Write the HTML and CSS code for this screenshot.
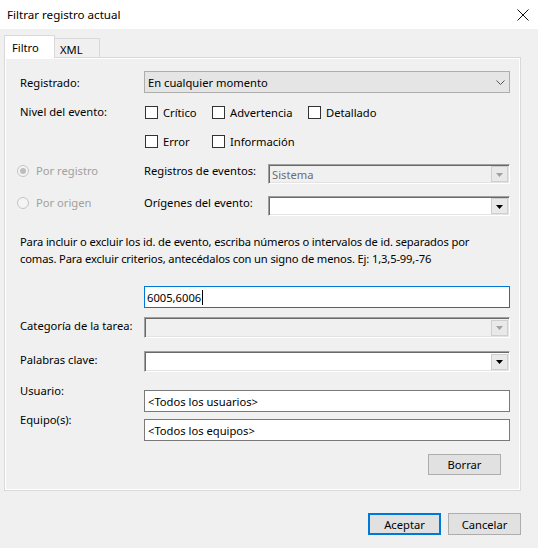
FILE: index.html
```html
<!DOCTYPE html>
<html lang="es">
<head>
<meta charset="utf-8">
<title>Filtrar registro actual</title>
<link rel="stylesheet" href="styles.css">
</head>
<body>
<div class="titlebar">
  <span class="title">Filtrar registro actual</span>
  <svg class="close" width="12" height="12" viewBox="0 0 12 12"><path d="M0.5 0.5L11.5 11.5M11.5 0.5L0.5 11.5" stroke="#111" stroke-width="1" fill="none"/></svg>
</div>
<div class="tabs">
  <div class="tab active">Filtro</div>
  <div class="tab">XML</div>
</div>
<div class="panel">
  <div class="row row-logged">
    <span class="label">Registrado:</span>
    <div class="select"><span>En cualquier momento</span><svg width="9" height="5" viewBox="0 0 9 5"><path d="M0.5 0.5L4.5 4.5L8.5 0.5" fill="none" stroke="#555" stroke-width="1"/></svg></div>
  </div>
  <div class="row row-level">
    <span class="label label-first">Nivel del evento:</span>
    <div class="checks">
      <label class="check"><span class="box"></span>Crítico</label>
      <label class="check"><span class="box"></span>Advertencia</label>
      <label class="check"><span class="box"></span>Detallado</label>
      <label class="check"><span class="box"></span>Error</label>
      <label class="check"><span class="box"></span>Información</label>
    </div>
  </div>
  <div class="row3 row-src1">
    <label class="radio disabled"><span class="dot checked"></span>Por registro</label>
    <span class="label">Registros de eventos:</span>
    <div class="combo disabled"><span class="combo-text">Sistema</span><span class="drop"><svg width="7" height="4" viewBox="0 0 7 4"><path d="M0 0H7L3.5 4Z" fill="#a0a0a0"/></svg></span></div>
  </div>
  <div class="row3 row-src2">
    <label class="radio disabled"><span class="dot"></span>Por origen</label>
    <span class="label">Orígenes del evento:</span>
    <div class="combo"><span class="combo-text"></span><span class="drop"><svg width="7" height="4" viewBox="0 0 7 4"><path d="M0 0H7L3.5 4Z" fill="#000"/></svg></span></div>
  </div>
  <p class="help">Para incluir o excluir los id. de evento, escriba números o intervalos de id. separados por<br>comas. Para excluir criterios, antecédalos con un signo de menos. Ej: 1,3,5-99,-76</p>
  <div class="row row-ids">
    <span></span>
    <div class="input focus">6005,6006<span class="caret"></span></div>
  </div>
  <div class="row row-cat">
    <span class="label">Categoría de la tarea:</span>
    <div class="combo combo21 disabled"><span class="combo-text"></span><span class="drop"><svg width="7" height="4" viewBox="0 0 7 4"><path d="M0 0H7L3.5 4Z" fill="#a0a0a0"/></svg></span></div>
  </div>
  <div class="row row-kw">
    <span class="label">Palabras clave:</span>
    <div class="combo combo21"><span class="combo-text"></span><span class="drop"><svg width="7" height="4" viewBox="0 0 7 4"><path d="M0 0H7L3.5 4Z" fill="#000"/></svg></span></div>
  </div>
  <div class="row row-user">
    <span class="label label-high">Usuario:</span>
    <div class="input">&lt;Todos los usuarios&gt;</div>
  </div>
  <div class="row row-pc">
    <span class="label label-high">Equipo(s):</span>
    <div class="input">&lt;Todos los equipos&gt;</div>
  </div>
  <div class="clear-row">
    <button class="btn">Borrar</button>
  </div>
</div>
<div class="actions">
  <button class="btn default">Aceptar</button>
  <button class="btn">Cancelar</button>
</div>
</body>
</html>
```
FILE: styles.css
```css
* { box-sizing: border-box; }
html, body { margin: 0; padding: 0; }
body {
  width: 538px;
  height: 548px;
  overflow: hidden;
  background: #f0f0f0;
  font-family: "Noto Sans", "DejaVu Sans", sans-serif;
  font-size: 11.2px;
  color: #000;
}
.titlebar {
  height: 29px;
  background: #fff;
  display: flex;
  align-items: center;
  justify-content: space-between;
  padding: 0 9px 0 7px;
}
.title { font-size: 11.6px; }
.close { display: block; margin-top: 1px; }

.tabs {
  height: 28px;
  display: flex;
  align-items: flex-end;
  padding-left: 4px;
  position: relative;
  z-index: 1;
}
.tab {
  display: flex;
  align-items: center;
  border: 1px solid #d9d9d9;
  border-bottom: none;
  background: #f0f0f0;
}
.tab.active {
  width: 51px;
  height: 23px;
  margin-bottom: -1px;
  padding-left: 7px;
  background: #fff;
}
.tab:not(.active) {
  width: 45px;
  height: 19px;
  border-left: none;
  padding-left: 5px;
  padding-top: 2px;
}

.panel {
  margin-left: 4px;
  width: 517px;
  height: 434px;
  border: 1px solid #d9d9d9;
  box-shadow: inset 1px 1px 0 #fff, inset -1px -1px 0 #fff;
  padding: 13px 10px 0 15px;
}
.row {
  display: grid;
  grid-template-columns: 124px 1fr;
  align-items: start;
}
.row3 {
  display: grid;
  grid-template-columns: 124px 124px 1fr;
  align-items: start;
  height: 20px;
}
.label { line-height: 17px; white-space: nowrap; }
.label-high { margin-top: -8px; }
.row3 .label { margin-top: -2px; }

.row-logged { align-items: center; height: 22px; }
.select {
  height: 22px;
  border: 1px solid #adadad;
  background: #e5e5e5;
  display: flex;
  align-items: center;
  justify-content: space-between;
  padding: 0 4px 0 3px;
}
.select svg { display: block; }

.row-level { margin-top: 9px; }
.label-first { line-height: 20px; }
.checks {
  display: grid;
  grid-template-columns: 67px 96px auto;
  row-gap: 9px;
}
.check {
  height: 20px;
  display: flex;
  align-items: center;
  gap: 5px;
  padding-left: 1px;
}
.box {
  width: 13px;
  height: 13px;
  border: 1px solid #333;
  background: #fff;
  flex: none;
}

.row-src1 { margin-top: 13px; }
.row-src2 { margin-top: 12px; }
.radio {
  display: flex;
  align-items: center;
  gap: 7px;
  height: 17px;
  margin-top: -2px;
  margin-left: -3px;
}
.radio.disabled { color: #a0a0a0; }
.dot {
  width: 12px;
  height: 12px;
  border-radius: 50%;
  border: 1px solid #c4c4c4;
  background: #f4f4f4;
  display: flex;
  align-items: center;
  justify-content: center;
  flex: none;
}
.dot.checked::after {
  content: "";
  width: 6px;
  height: 6px;
  border-radius: 50%;
  background: #bdbdbd;
}

.combo {
  height: 20px;
  border: 1px solid;
  border-color: #a0a0a0 #fff #fff #a0a0a0;
  box-shadow: inset 1px 1px 0 #696969, inset -1px -1px 0 #e3e3e3;
  background: #fff;
  display: flex;
  align-items: center;
  justify-content: space-between;
  padding: 0 1px 0 2px;
}
.combo21 { height: 21px; }
.combo.disabled { background: #f0f0f0; }
.combo-text { color: #6d6d6d; padding-left: 1px; }
.drop {
  width: 17px;
  height: 16px;
  border: 1px solid #cfcfcf;
  background: #e9e9e9;
  display: flex;
  align-items: center;
  justify-content: center;
}
.drop svg { display: block; margin-top: 1px; }

.help {
  margin: 17px 0 0 0;
  line-height: 17px;
  white-space: nowrap;
  letter-spacing: -0.15px;
}

.row-ids { margin-top: 19px; }
.input {
  height: 22px;
  border: 1px solid #7a7a7a;
  background: #fff;
  display: flex;
  align-items: center;
  padding-left: 3px;
  white-space: nowrap;
}
.input.focus { border-color: #0078d7; padding-left: 2px; }
.caret {
  display: inline-block;
  width: 1px;
  height: 15px;
  background: #000;
  margin-left: 1px;
}

.row-cat { margin-top: 9px; }
.row-kw { margin-top: 13px; }
.row-user { margin-top: 18px; }
.row-pc { margin-top: 7px; }

.clear-row {
  display: flex;
  justify-content: flex-end;
  margin-top: 13px;
  padding-right: 9px;
}
.btn {
  font-family: inherit;
  font-size: 11.2px;
  color: #000;
  width: 73px;
  height: 21px;
  border: 1px solid #adadad;
  background: #e1e1e1;
  padding: 0;
  margin: 0;
  display: flex;
  align-items: center;
  justify-content: center;
}
.actions {
  display: flex;
  justify-content: flex-end;
  gap: 7px;
  margin-top: 22px;
  padding-right: 17px;
}
.actions .btn { height: 22px; }
.btn.default { border: 2px solid #0078d7; }
```
